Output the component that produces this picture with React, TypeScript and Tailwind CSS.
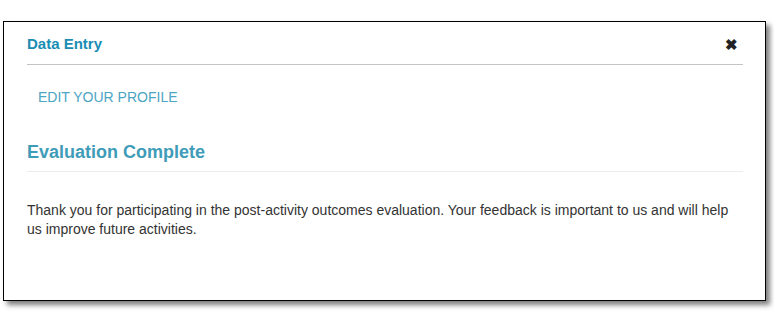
export default function App() {
  return (
    <div className="w-[774px] h-[312px] bg-white pt-[21px] pl-[3px] font-['Liberation_Sans',Arial,sans-serif]">
      <div className="w-[763px] h-[280px] border border-black bg-white shadow-[4px_4px_5px_rgba(0,0,0,0.5)] pl-[23px] pr-[22px]">
        {/* header */}
        <div className="h-[43px] pt-[2px] flex items-center justify-between border-b border-[#c4c4c4]">
          <span className="text-[15px] font-bold text-[#1a8db3]">Data Entry</span>
          <span className="text-[15px] font-bold text-[#222] mr-[5px] leading-none">✖</span>
        </div>

        <div className="mt-[22px] pl-[11px] text-[14px] leading-[20px] text-[#4ba5c3] uppercase">
          Edit Your Profile
        </div>

        <h2 className="mt-[33px] text-[18px] leading-[24px] font-bold text-[#3f9cb8] pb-[7px] border-b border-[#ececec]">
          Evaluation Complete
        </h2>

        <p className="mt-[29px] text-[14px] leading-[19px] text-[#333]">
          Thank you for participating in the post-activity outcomes evaluation. Your feedback is important to us and will help
          us improve future activities.
        </p>
      </div>
    </div>
  );
}
